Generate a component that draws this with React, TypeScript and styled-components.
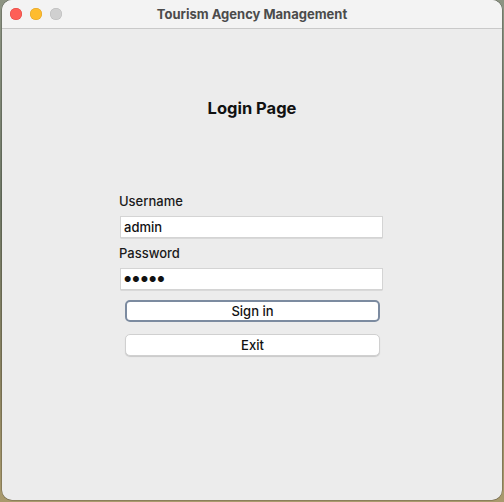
import React from "react";
import styled, { createGlobalStyle } from "styled-components";

const Global = createGlobalStyle`
  html, body {
    margin: 0;
    padding: 0;
  }
  body {
    width: 504px;
    height: 502px;
    overflow: hidden;
    font-family: "Inter", "Noto Sans", "Liberation Sans", sans-serif;
  }
`;

const Desktop = styled.div`
  width: 504px;
  height: 502px;
  box-sizing: border-box;
  padding: 0 2px 2px 2px;
  background: linear-gradient(180deg, #8d9483 0%, #6f7866 40%, #8a8260 75%, #a99a6d 100%);
`;

const Window = styled.div`
  height: 100%;
  display: flex;
  flex-direction: column;
  background: #ececec;
  border-radius: 10px;
  overflow: hidden;
  box-shadow: 0 0 0 0.5px rgba(0, 0, 0, 0.35);
`;

const TitleBar = styled.div`
  height: 28px;
  flex-shrink: 0;
  display: grid;
  grid-template-columns: 80px 1fr 80px;
  align-items: center;
  background: #f3f3f3;
  border-bottom: 1px solid #c9c9c9;
`;

const Lights = styled.div`
  display: flex;
  gap: 8px;
  padding-left: 8px;
`;

const Light = styled.span<{ $color: string; $edge: string }>`
  width: 12px;
  height: 12px;
  border-radius: 50%;
  background: ${(p) => p.$color};
  box-shadow: inset 0 0 0 0.5px ${(p) => p.$edge};
`;

const Title = styled.div`
  text-align: center;
  font-size: 13px;
  font-weight: 700;
  color: #4b4b4b;
`;

const Content = styled.div`
  flex: 1;
  display: flex;
  flex-direction: column;
  align-items: center;
`;

const Heading = styled.h1`
  margin: 69px 0 0 0;
  font-size: 16.5px;
  line-height: 20px;
  font-weight: 700;
  color: #111;
`;

const Form = styled.div`
  width: 266px;
  margin-top: 75px;
  display: flex;
  flex-direction: column;
`;

const Label = styled.label`
  font-size: 13px;
  line-height: 16px;
  font-weight: 500;
  color: #1a1a1a;
`;

const Field = styled.input<{ $secret?: boolean }>`
  margin: 8px 3px 8px 2px;
  height: 20px;
  box-sizing: border-box;
  border: none;
  box-shadow: 0 0 0 1px #d4d4d4, 0 1px 0 0.5px #c6c6c6;
  background: #fff;
  padding: 0 3px;
  font-family: inherit;
  font-size: ${(p) => (p.$secret ? "8px" : "13px")};
  font-weight: 500;
  letter-spacing: ${(p) => (p.$secret ? "1px" : "0")};
  color: #111;
  outline: none;
`;

const Button = styled.button<{ $focused?: boolean }>`
  margin: 0 5px 0 6px;
  height: 22px;
  box-sizing: border-box;
  background: #fff;
  border-radius: 5px;
  font-family: inherit;
  font-size: 13px;
  font-weight: 500;
  color: #111;
  padding: 0;
  border: ${(p) => (p.$focused ? "2.5px solid #7c8ba0" : "1px solid #d0d0d0")};
  box-shadow: ${(p) => (p.$focused ? "none" : "0 1px 1px rgba(0,0,0,0.15)")};
`;

const Buttons = styled.div`
  display: flex;
  flex-direction: column;
  gap: 12px;
  margin-top: 3px;
`;

export default function App() {
  return (
    <>
      <Global />
      <Desktop>
        <Window>
          <TitleBar>
            <Lights>
              <Light $color="#fe5f57" $edge="#e0443e" />
              <Light $color="#febc2e" $edge="#dea123" />
              <Light $color="#d0d0d0" $edge="#b8b8b8" />
            </Lights>
            <Title>Tourism Agency Management</Title>
            <span />
          </TitleBar>
          <Content>
            <Heading>Login Page</Heading>
            <Form>
              <Label>Username</Label>
              <Field defaultValue="admin" readOnly />
              <Label>Password</Label>
              <Field $secret defaultValue={"●●●●●"} readOnly />
              <Buttons>
                <Button $focused>Sign in</Button>
                <Button>Exit</Button>
              </Buttons>
            </Form>
          </Content>
        </Window>
      </Desktop>
    </>
  );
}
